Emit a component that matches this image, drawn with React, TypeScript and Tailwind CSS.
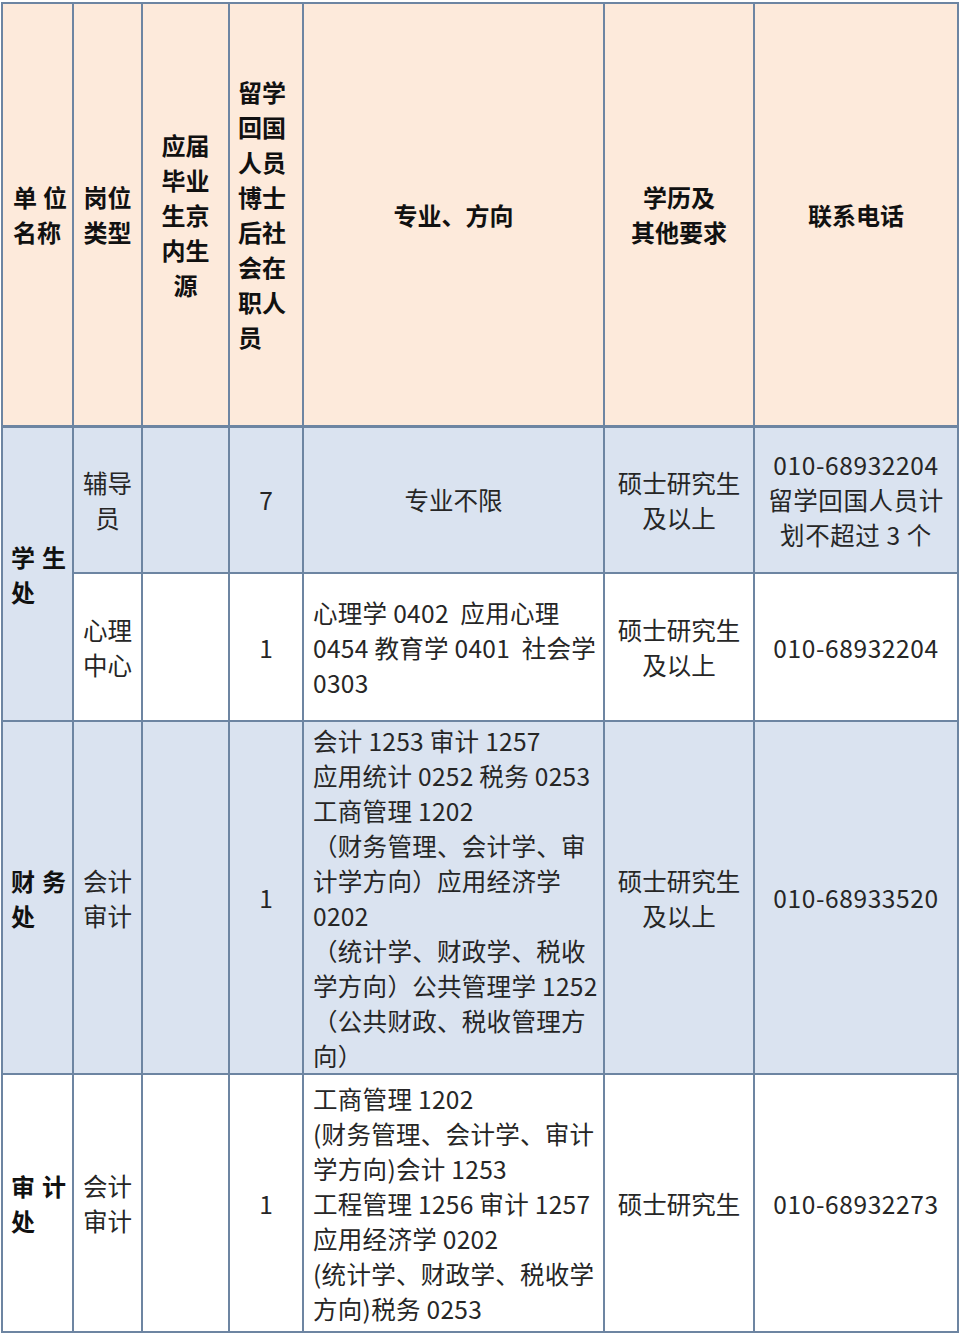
import React from "react"

const cell = "border-2 border-[#6d85a2] align-middle"
const head = `${cell} text-center font-bold text-[#111] leading-[35px] text-[24px]`
const body = `${cell} text-center text-[#262626] leading-[35px]`
const left = `${cell} text-left font-bold text-[#111] leading-[35px] text-[24px] pl-[8px]`
const major = `${cell} text-left text-[#262626] leading-[35px] pl-[9px] whitespace-pre tracking-[0.3px]`
const phone = `${body} tracking-[0.6px]`

function Lines({ items }: { items: string[] }) {
  return (
    <>
      {items.map((t, i) => (
        <div key={i}>{t}</div>
      ))}
    </>
  )
}

// 单位名称 column: first line is spread out like justified text
function Spread({ a, b, c }: { a: string; b: string; c: string }) {
  return (
    <>
      <div>
        <span className="mr-[7px]">{a}</span>
        {b}
      </div>
      <div>{c}</div>
    </>
  )
}

export default function App() {
  return (
    <div className="min-h-screen bg-white pt-[2px] pl-[1px] font-['Noto_Sans_CJK_SC','Noto_Sans',sans-serif] text-[24.5px]">
      <table className="w-[956px] table-fixed border-collapse">
        <colgroup>
          <col className="w-[71px]" />
          <col className="w-[69px]" />
          <col className="w-[87px]" />
          <col className="w-[74px]" />
          <col className="w-[301px]" />
          <col className="w-[150px]" />
          <col className="w-[204px]" />
        </colgroup>
        <thead>
          <tr className="h-[423px] bg-[#fdeadb]">
            <th className={`${head} text-left pl-[10px]`}>
              <div>
                <span className="mr-[6px]">单</span>位
              </div>
              <div>名称</div>
            </th>
            <th className={head}>
              <Lines items={["岗位", "类型"]} />
            </th>
            <th className={head}>
              <Lines items={["应届", "毕业", "生京", "内生", "源"]} />
            </th>
            <th className={`${head} text-left pl-[8px]`}>
              <Lines items={["留学", "回国", "人员", "博士", "后社", "会在", "职人", "员"]} />
            </th>
            <th className={head}>专业、方向</th>
            <th className={head}>
              <Lines items={["学历及", "其他要求"]} />
            </th>
            <th className={head}>联系电话</th>
          </tr>
        </thead>
        <tbody>
          <tr className="h-[147px] bg-[#dae3f0]">
            <td rowSpan={2} className={`${left} border-t-[3px]`}>
              <Spread a="学" b="生" c="处" />
            </td>
            <td className={`${body} border-t-[3px]`}>
              <Lines items={["辅导", "员"]} />
            </td>
            <td className={`${body} border-t-[3px]`}></td>
            <td className={`${body} border-t-[3px]`}>7</td>
            <td className={`${body} border-t-[3px]`}>专业不限</td>
            <td className={`${body} border-t-[3px]`}>
              <Lines items={["硕士研究生", "及以上"]} />
            </td>
            <td className={`${phone} border-t-[3px]`}>
              <Lines items={["010-68932204", "留学回国人员计", "划不超过 3 个"]} />
            </td>
          </tr>
          <tr className="h-[148px] bg-white">
            <td className={body}>
              <Lines items={["心理", "中心"]} />
            </td>
            <td className={body}></td>
            <td className={body}>1</td>
            <td className={major}>
              <Lines items={["心理学 0402  应用心理", "0454 教育学 0401  社会学", "0303"]} />
            </td>
            <td className={body}>
              <Lines items={["硕士研究生", "及以上"]} />
            </td>
            <td className={phone}>010-68932204</td>
          </tr>
          <tr className="h-[353px] bg-[#dae3f0]">
            <td className={left}>
              <Spread a="财" b="务" c="处" />
            </td>
            <td className={body}>
              <Lines items={["会计", "审计"]} />
            </td>
            <td className={body}></td>
            <td className={body}>1</td>
            <td className={major}>
              <Lines
                items={[
                  "会计 1253 审计 1257",
                  "应用统计 0252 税务 0253",
                  "工商管理 1202",
                  "（财务管理、会计学、审",
                  "计学方向）应用经济学",
                  "0202",
                  "（统计学、财政学、税收",
                  "学方向）公共管理学 1252",
                  "（公共财政、税收管理方",
                  "向）",
                ]}
              />
            </td>
            <td className={body}>
              <Lines items={["硕士研究生", "及以上"]} />
            </td>
            <td className={phone}>010-68933520</td>
          </tr>
          <tr className="h-[258px] bg-white">
            <td className={left}>
              <Spread a="审" b="计" c="处" />
            </td>
            <td className={body}>
              <Lines items={["会计", "审计"]} />
            </td>
            <td className={body}></td>
            <td className={body}>1</td>
            <td className={major}>
              <Lines
                items={[
                  "工商管理 1202",
                  "(财务管理、会计学、审计",
                  "学方向)会计 1253",
                  "工程管理 1256 审计 1257",
                  "应用经济学 0202",
                  "(统计学、财政学、税收学",
                  "方向)税务 0253",
                ]}
              />
            </td>
            <td className={body}>硕士研究生</td>
            <td className={phone}>010-68932273</td>
          </tr>
        </tbody>
      </table>
    </div>
  )
}
